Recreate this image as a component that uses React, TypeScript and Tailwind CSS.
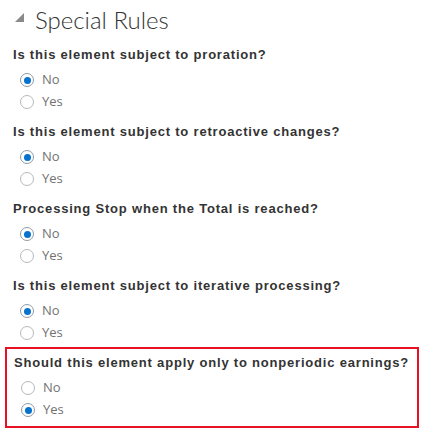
import React from "react";

type Question = {
  label: string;
  value: "No" | "Yes";
  highlighted?: boolean;
};

const questions: Question[] = [
  { label: "Is this element subject to proration?", value: "No" },
  { label: "Is this element subject to retroactive changes?", value: "No" },
  { label: "Processing Stop when the Total is reached?", value: "No" },
  { label: "Is this element subject to iterative processing?", value: "No" },
  {
    label: "Should this element apply only to nonperiodic earnings?",
    value: "Yes",
    highlighted: true,
  },
];

function Radio({ label, checked }: { label: string; checked: boolean }) {
  return (
    <label className="flex h-[22px] items-center">
      <span
        className={
          "flex h-[14px] w-[14px] items-center justify-center rounded-full border bg-white " +
          (checked ? "border-[#8f9aa6]" : "border-[#b5b9bd]")
        }
      >
        {checked && <span className="h-[7px] w-[7px] rounded-full bg-[#0572ce]" />}
      </span>
      <span className="ml-[8px] text-[13px] text-[#727272]">{label}</span>
    </label>
  );
}

function Group({ q }: { q: Question }) {
  return (
    <div>
      <div className="h-[20px] text-[13px] leading-[20px] font-bold tracking-[0.8px] text-[#333] [font-family:'Liberation_Sans',Arial,sans-serif]">
        {q.label}
      </div>
      <div className="mt-[4px] pl-[7px]">
        <Radio label="No" checked={q.value === "No"} />
        <Radio label="Yes" checked={q.value === "Yes"} />
      </div>
    </div>
  );
}

export default function App() {
  return (
    <div className="h-[447px] w-[435px] bg-white pt-[2px] [font-family:'Open_Sans',sans-serif]">
      {/* Header */}
      <div className="flex h-[36px] items-center pl-[15px]">
        <svg width="10" height="10" viewBox="0 0 10 10" className="mb-[4px]">
          <polygon points="9,0 9,9 0,9" fill="#8a8a8a" />
        </svg>
        <h2 className="ml-[10px] text-[24px] font-light leading-[32px] text-[#333] [font-family:Lato,sans-serif]">
          Special Rules
        </h2>
      </div>

      <div className="flex flex-col gap-[9px] pl-[13px] pt-[7px]">
        {questions
          .filter((q) => !q.highlighted)
          .map((q, i) => (
            <Group key={i} q={q} />
          ))}
      </div>

      {/* Highlighted */}
      {questions
        .filter((q) => q.highlighted)
        .map((q, i) => (
          <div
            key={i}
            className="ml-[5px] mt-[3px] w-[414px] border-2 border-[#e81123] pb-[5px] pl-[7px] pt-[4px]"
          >
            <Group q={q} />
          </div>
        ))}
    </div>
  );
}
